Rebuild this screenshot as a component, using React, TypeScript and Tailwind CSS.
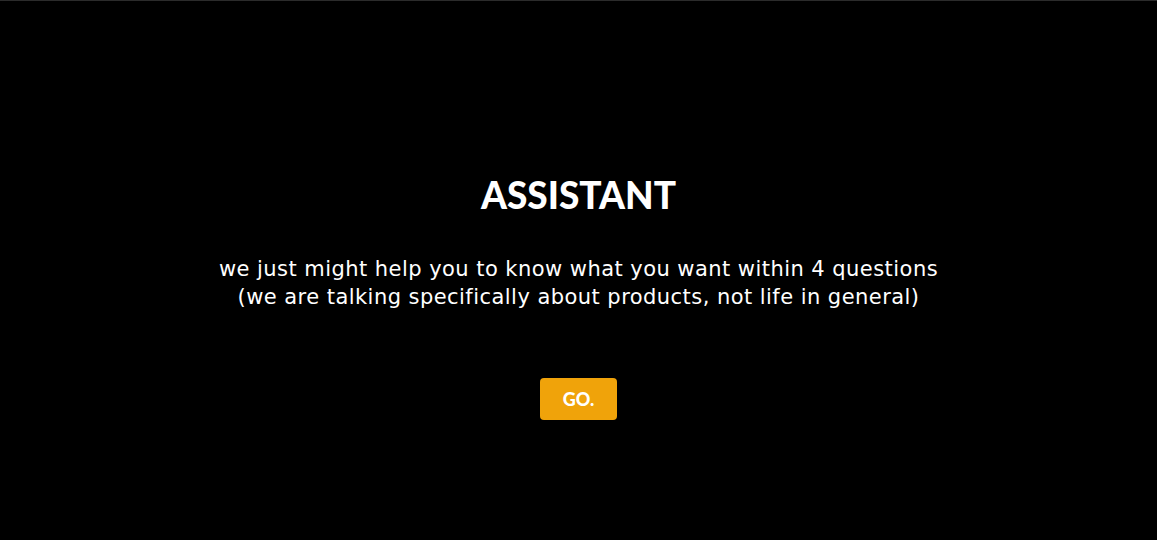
export default function App() {
  return (
    <div className="w-[1157px] h-[540px] bg-black border-t border-[#2b2b2b] flex flex-col items-center font-['DejaVu_Sans',sans-serif]">
      <h1 className="mt-[172px] text-white text-[37px] leading-[44px] font-black font-['Lato','Liberation_Sans',sans-serif]">ASSISTANT</h1>
      <div className="mt-[38px] text-white text-[21px] leading-[28px] tracking-[0.45px] text-center">
        <p>we just might help you to know what you want within 4 questions</p>
        <p>(we are talking specifically about products, not life in general)</p>
      </div>
      <button className="mt-[67px] w-[77px] h-[42px] rounded-[4px] bg-[#f0a30a] text-white text-[18px] font-black font-['Lato','Liberation_Sans',sans-serif]">GO.</button>
    </div>
  );
}
